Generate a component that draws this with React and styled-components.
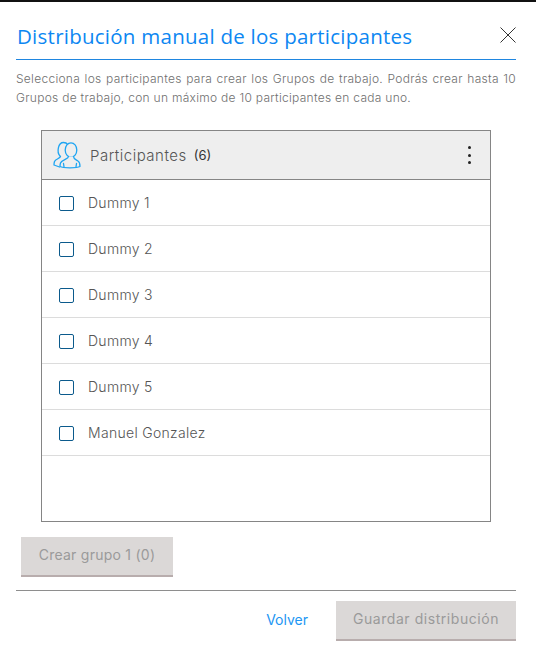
import React from "react";
import styled, { createGlobalStyle } from "styled-components";

const Global = createGlobalStyle`
  html, body { margin: 0; padding: 0; background: #fff; }
  * { box-sizing: border-box; }
`;

const Modal = styled.div`
  width: 536px;
  height: 657px;
  border-top: 2px solid #111;
  padding: 0 20px 0 16px;
  background: #fff;
  font-family: Inter, "Liberation Sans", sans-serif;
  font-weight: 300;
  display: flex;
  flex-direction: column;
`;

const Header = styled.header`
  height: 58px;
  border-bottom: 1px solid #1f86e0;
  display: flex;
  align-items: center;
  justify-content: space-between;
  padding: 11px 0 0 1px;
`;

const Title = styled.h1`
  margin: 0;
  font-family: "Open Sans", sans-serif;
  font-size: 20.5px;
  font-weight: 500;
  letter-spacing: 0.25px;
  color: #0d87f2;
  white-space: nowrap;
`;

const CloseButton = styled.button`
  width: 16px;
  height: 16px;
  padding: 0;
  border: 0;
  background: none;
  display: block;
  position: relative;
  top: -1px;
`;

const Description = styled.p`
  margin: 9px 0 0;
  height: 38px;
  font-size: 12px;
  letter-spacing: 0.28px;
  line-height: 19px;
  color: #6f6f6f;
  text-align: justify;
`;

const ListPanel = styled.section`
  margin: 23px 25px 0;
  height: 392px;
  border: 1px solid #858585;
  display: flex;
  flex-direction: column;
`;

const ListHeader = styled.div`
  height: 49px;
  flex: none;
  background: #eeeeee;
  border-bottom: 1px solid #858585;
  display: flex;
  align-items: center;
  padding: 0 17px 0 11px;
`;

const HeaderLabel = styled.span`
  margin-left: 9px;
  font-size: 15px;
  color: #555;
  letter-spacing: 0.5px;
`;

const Count = styled.span`
  margin-left: 7px;
  font-size: 13px;
  font-weight: 400;
  color: #333;
`;

const MenuButton = styled.button`
  margin-left: auto;
  padding: 0;
  border: 0;
  background: none;
  width: 8px;
  display: flex;
  flex-direction: column;
  align-items: center;
  gap: 4.5px;
`;

const Dot = styled.span`
  width: 3px;
  height: 3px;
  border-radius: 50%;
  background: #222;
`;

const Row = styled.label`
  height: 46px;
  flex: none;
  border-bottom: 1px solid #dcdcdc;
  display: flex;
  align-items: center;
  padding-left: 17px;
  font-size: 14px;
  letter-spacing: 0.3px;
  color: #555;
`;

const Box = styled.span`
  width: 15px;
  height: 15px;
  flex: none;
  border: 1.5px solid #0b5a8c;
  border-radius: 2px;
  margin: 1px 14px 0 0;
`;

const DisabledButton = styled.button`
  border: 0;
  border-bottom: 2px solid #b8adad;
  background: #dbd8d7;
  color: #9a9a9a;
  font-family: inherit;
  font-weight: 400;
  font-size: 14px;
  letter-spacing: ${(p) => p.$spacing}px;
  height: 40px;
  width: ${(p) => p.$width}px;
  padding: 0 0 3px;
`;

const CreateRow = styled.div`
  margin: 15px 0 0 5px;
`;

const Footer = styled.footer`
  margin-top: 13px;
  border-top: 1px solid #8e8e8e;
  padding-top: 10px;
  display: flex;
  justify-content: flex-end;
  align-items: center;
`;

const BackLink = styled.a`
  color: #2196f3;
  font-size: 14px;
  font-weight: 400;
  margin: 0 28px 3px 0;
`;

function UsersIcon() {
  return (
    <svg width="28" height="28" viewBox="0 0 28 28" fill="none" stroke="#1fa5f2" strokeWidth="1.3" strokeLinecap="round" strokeLinejoin="round">
      <path d="M7 15 C3.5 11.5 5 1.5 10.5 1.5 C12.5 1.5 14 2.5 14.8 3.6" />
      <path d="M7.5 15.5 C7 17.5 2.5 18 1.5 20.5 C1 22 1 23 1 24 L6.5 26" />
      <ellipse cx="18" cy="9" rx="5.8" ry="7.2" fill="#eee" />
      <path d="M15.5 15.5 C15.5 18 9 18.5 7.5 22 C7 23.5 7 25 7 25.5 C10 27.2 24 27.2 27 25.5 C27 23 26.5 21 25 20 C23 18.6 20.5 18 20.5 15.5" fill="#eee" />
      <path d="M10.5 22.5 L11 25.8 M23.5 22.5 L23 25.8" />
    </svg>
  );
}

function CloseIcon() {
  return (
    <svg width="16" height="16" viewBox="0 0 16 16" stroke="#333" strokeWidth="1" fill="none">
      <path d="M0.5 0.5 L15.5 15.5 M15.5 0.5 L0.5 15.5" />
    </svg>
  );
}

const participants = ["Dummy 1", "Dummy 2", "Dummy 3", "Dummy 4", "Dummy 5", "Manuel Gonzalez"];

export default function App() {
  return (
    <>
      <Global />
      <Modal>
        <Header>
          <Title>Distribución manual de los participantes</Title>
          <CloseButton aria-label="Cerrar"><CloseIcon /></CloseButton>
        </Header>
        <Description>
          Selecciona los participantes para crear los Grupos de trabajo. Podrás crear hasta 10 Grupos de trabajo, con un máximo de 10 participantes en cada uno.
        </Description>
        <ListPanel>
          <ListHeader>
            <UsersIcon />
            <HeaderLabel>Participantes</HeaderLabel>
            <Count>(6)</Count>
            <MenuButton aria-label="Opciones"><Dot /><Dot /><Dot /></MenuButton>
          </ListHeader>
          {participants.map((name) => (
            <Row key={name}>
              <Box />
              {name}
            </Row>
          ))}
        </ListPanel>
        <CreateRow>
          <DisabledButton $width={152} $spacing={0.25} disabled>Crear grupo 1 (0)</DisabledButton>
        </CreateRow>
        <Footer>
          <BackLink>Volver</BackLink>
          <DisabledButton $width={180} $spacing={0.55} disabled>Guardar distribución</DisabledButton>
        </Footer>
      </Modal>
    </>
  );
}
